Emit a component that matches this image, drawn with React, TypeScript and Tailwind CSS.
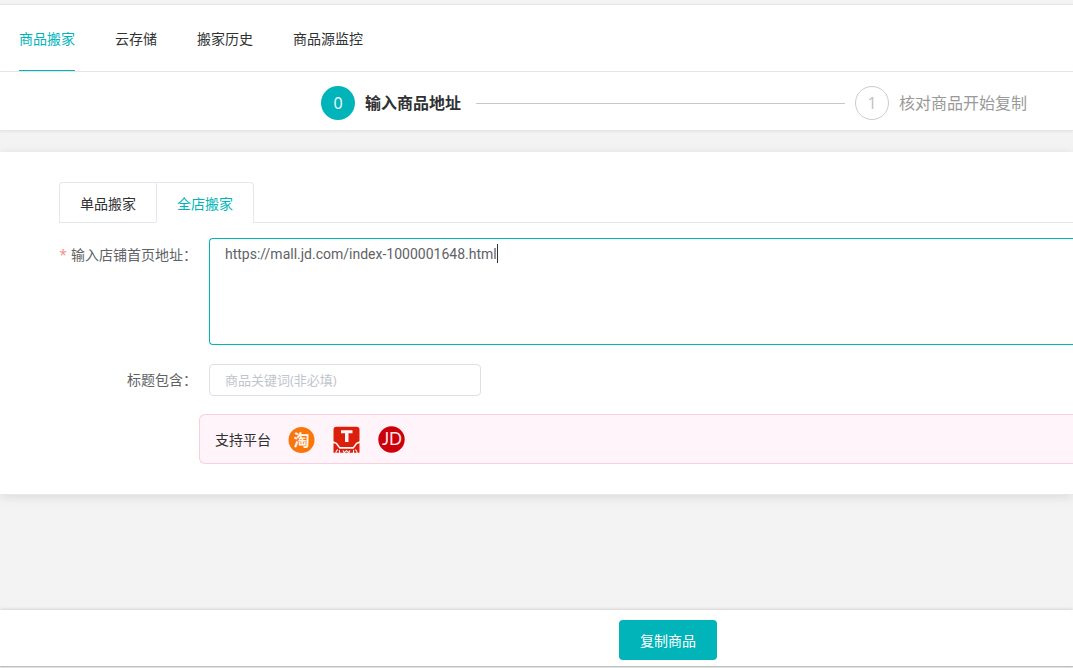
import React, { useState } from "react";

const navItems = ["商品搬家", "云存储", "搬家历史", "商品源监控"];
const modeTabs = ["单品搬家", "全店搬家"];

const Nav = () => {
    const [active, setActive] = useState(0);

    return (
        <nav className="flex gap-10 border-y border-[#e6e6e6] bg-white px-[19px]">
            {navItems.map((item, index) => (
                <a
                    key={item}
                    href="#"
                    onClick={() => setActive(index)}
                    className={`border-b pt-[23px] pb-5 leading-[22px] ${
                        index === active ? "border-b-[#00b4ba] text-[#00b4ba]" : "border-b-transparent text-[#303133]"
                    }`}
                >
                    {item}
                </a>
            ))}
        </nav>
    );
};

const Steps = () => {
    return (
        <ol className="flex items-center border-b border-[#e6e6e6] bg-white pt-3.5 pr-[46px] pb-2.5 pl-[321px] text-base whitespace-nowrap shadow-[0_1px_3px_rgba(0,0,0,0.06)]">
            <li className="flex flex-1 items-center">
                <span className="flex size-[34px] items-center justify-center rounded-full bg-[#00b4ba] text-white">0</span>
                <span className="ml-2.5 font-bold text-[#303133]">输入商品地址</span>
                <span className="mr-2.5 ml-[15px] h-px flex-1 bg-[#c8c8c8]"></span>
            </li>
            <li className="flex items-center">
                <span className="flex size-[34px] items-center justify-center rounded-full border border-[#cccccc] text-[#bfbfbf]">1</span>
                <span className="ml-2.5 text-[#999999]">核对商品开始复制</span>
            </li>
        </ol>
    );
};

const ModeTabs = () => {
    const [active, setActive] = useState(1);

    return (
        <div className="flex border-b border-[#e4e7ed]">
            <div role="tablist" className="-mb-px flex rounded-t border border-b-0 border-[#e4e7ed]">
                {modeTabs.map((tab, index) => (
                    <button
                        key={tab}
                        role="tab"
                        type="button"
                        aria-selected={index === active}
                        onClick={() => setActive(index)}
                        className={`h-10 border-b px-5 pt-0.5 not-first:border-l not-first:border-l-[#e4e7ed] ${
                            index === active ? "border-b-white text-[#00b4ba]" : "border-b-[#e4e7ed] text-[#303133]"
                        }`}
                    >
                        {tab}
                    </button>
                ))}
            </div>
        </div>
    );
};

const TaobaoIcon = () => (
    <svg viewBox="0 0 27 27" className="size-[27px]" role="img" aria-label="淘宝">
        <circle cx="13.5" cy="14" r="13" fill="#f9760c" />
        <text x="13.5" y="19.6" textAnchor="middle" fontSize="16" fontWeight="700" fill="#fff3ea">淘</text>
    </svg>
);

const TmallIcon = () => (
    <svg viewBox="0 0 27 27" className="size-[27px]" role="img" aria-label="天猫">
        <path d="M3.5 0.8h20a3 3 0 0 1 3 3V15c0 1-3 1-4 2.500l-2.500 3.500h-13L4.500 17.500c-1-1.500-4-1.500-4-2.500V3.800a3 3 0 0 1 3-3z" fill="#db1f0c" />
        <path d="M8 4.300h11.500v3h-4v8.700h-3.500V7.300H8z" fill="#fff3f8" />
        <path d="M0.500 17.300c1.500 0 2.500.7 3.300 1.900L6.500 22.700h14l2.700-3.500c.8-1.200 1.800-1.900 3.300-1.900v9.400h-26z" fill="#db1f0c" />
        <g fill="none" stroke="#fff3f8" strokeWidth="1.100">
            <path d="M2.800 27.500c0-2 .7-3.200 2-4" />
            <path d="M7 27.500c-.7-1.300-.8-2.300-.5-3.500" />
            <path d="M10 24.500l1.200 2.200 2.300-2 2.300 2 1.200-2.200" />
            <path d="M20 27.500c.7-1.300.8-2.300.5-3.500" />
            <path d="M24.200 27.500c0-2-.7-3.200-2-4" />
        </g>
    </svg>
);

const JdIcon = () => (
    <svg viewBox="0 0 27 27" className="size-[27px]" role="img" aria-label="京东">
        <circle cx="13.5" cy="13.5" r="13.2" fill="#cb0008" />
        <text x="14" y="19.2" textAnchor="middle" fontSize="17" fontFamily="Lato" fill="#ffe6ea">JD</text>
    </svg>
);

const ShopForm = () => {
    const [url, setUrl] = useState("https://mall.jd.com/index-1000001648.html");
    const [keyword, setKeyword] = useState("");

    return (
        <form className="mt-[15px] text-[#606266]">
            <div className="flex">
                <label htmlFor="shop-url" className="w-[150px] shrink-0 pt-px pr-3 text-right leading-8 whitespace-nowrap">
                    <span className="mr-1 text-[#f78989]">*</span>输入店铺首页地址：
                </label>
                <div className="relative flex-1">
                    <textarea
                        id="shop-url"
                        value={url}
                        spellCheck={false}
                        onChange={(e) => setUrl(e.target.value)}
                        className="block h-[107px] w-full resize-none rounded-l border border-r-0 border-[#00b4ba] bg-white px-[15px] py-[5px] font-[Roboto,sans-serif] leading-[21px] outline-none"
                    />
                    <span className="absolute top-1.5 left-[288px] h-[19px] w-px bg-[#303133]"></span>
                </div>
            </div>
            <div className="mt-[19px] flex">
                <label htmlFor="keyword" className="w-[150px] shrink-0 pr-3 text-right leading-8">
                    标题包含：
                </label>
                <input
                    id="keyword"
                    type="text"
                    value={keyword}
                    placeholder="商品关键词(非必填)"
                    onChange={(e) => setKeyword(e.target.value)}
                    className="h-8 w-[272px] rounded border border-[#dcdfe6] px-[15px] text-[13px] outline-none placeholder:text-[#c0c4cc]"
                />
            </div>
        </form>
    );
};

const Platforms = () => {
    return (
        <div className="mt-[18px] ml-[140px] flex h-[50px] items-center gap-[17px] rounded-l-md border border-r-0 border-[#fbcfd9] bg-[#fff4fa] pl-[15px] text-[#303133]">
            <span className="pt-0.5">支持平台</span>
            <div className="flex gap-[18px]">
                <TaobaoIcon />
                <TmallIcon />
                <JdIcon />
            </div>
        </div>
    );
};

const App = () => {
    return (
        <div className="flex min-h-screen flex-col overflow-hidden bg-[#f3f3f3] pt-1 font-['Open_Sans','Noto_Sans_CJK_SC',sans-serif] text-sm">
            <Nav />
            <Steps />
            <main className="mt-[21px] border-b border-[#e4e7ed] bg-white pt-[30px] pb-[30px] pl-[59px] shadow-[0_2px_10px_rgba(0,0,0,0.1)]">
                <ModeTabs />
                <ShopForm />
                <Platforms />
            </main>
            <footer className="mt-auto mb-px flex justify-center border-b border-[#c0c0c0] bg-white pt-2.5 pb-1.5 pl-[263px] shadow-[0_0_4px_rgba(0,0,0,0.2)]">
                <button type="button" className="h-10 rounded bg-[#00b4ba] px-[21px] pt-0.5 text-white">
                    复制商品
                </button>
            </footer>
        </div>
    );
};

export default App;
